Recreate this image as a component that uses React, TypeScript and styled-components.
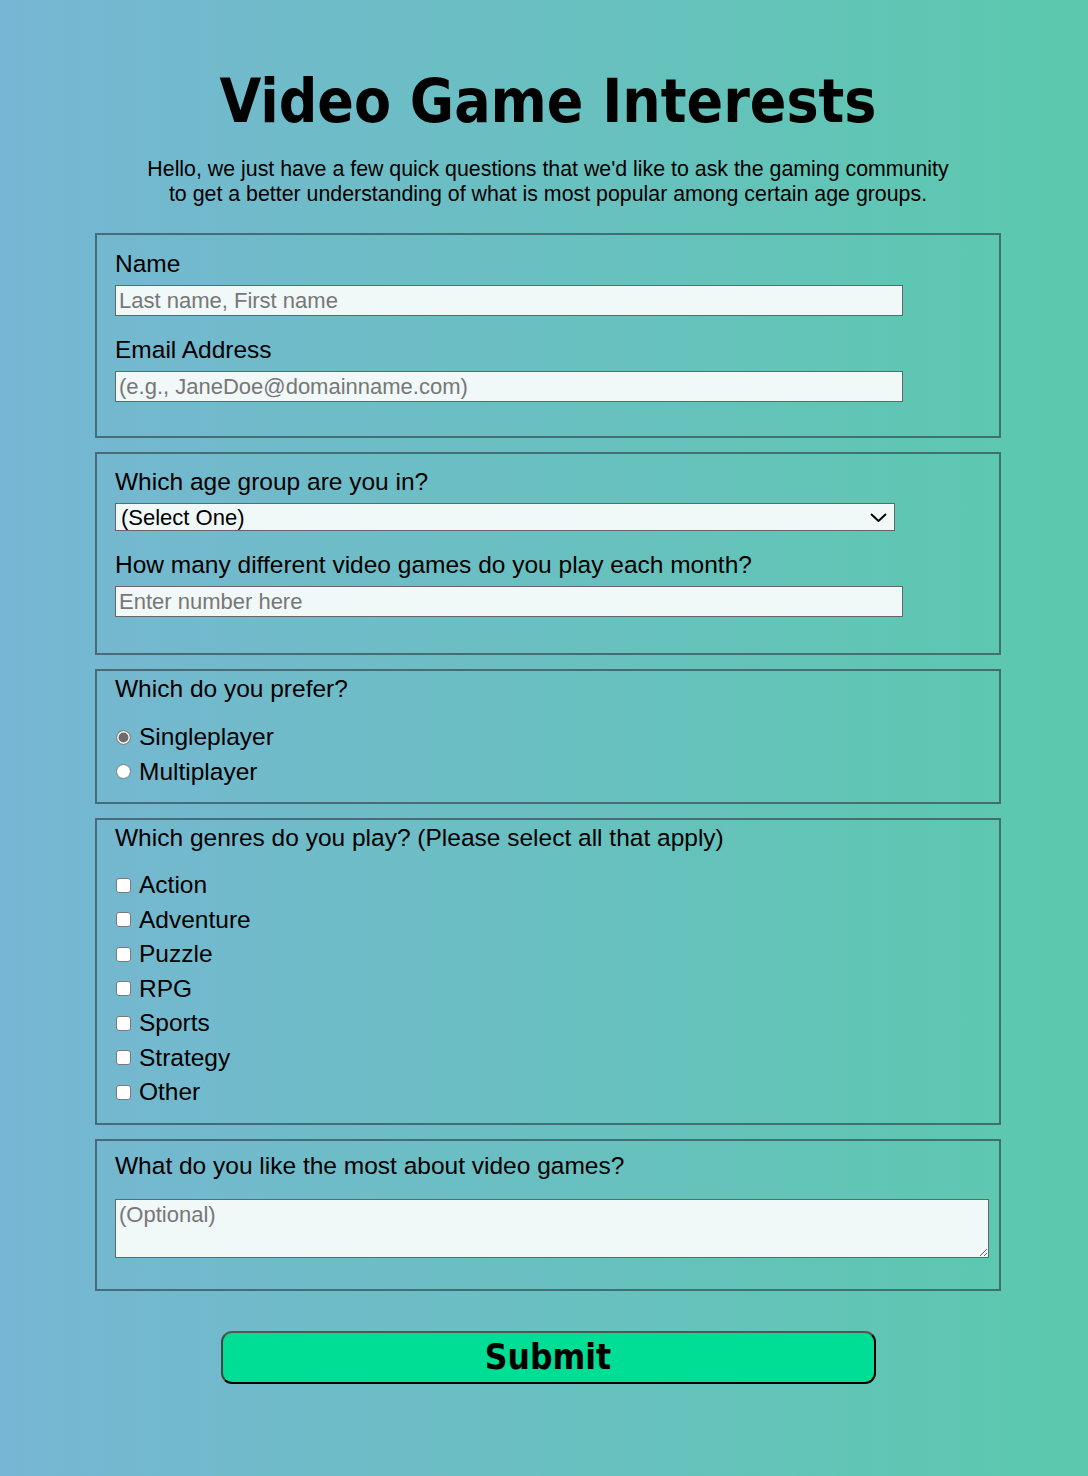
import React from "react";
import styled, { createGlobalStyle } from "styled-components";

const GlobalStyle = createGlobalStyle`
  html, body {
    margin: 0;
    padding: 0;
  }
  body {
    font-family: "Liberation Sans", Arial, sans-serif;
    color: #000;
  }
`;

const Page = styled.div`
  min-height: 100vh;
  box-sizing: border-box;
  background: linear-gradient(90deg, #77b6d4 0%, #5bc9ad 100%);
  padding: 66px 0 93px 8px;
  display: flex;
  flex-direction: column;
  align-items: center;
`;

const Title = styled.h1`
  margin: 0;
  font-family: "DejaVu Sans Condensed", "DejaVu Sans", Verdana, sans-serif;
  font-stretch: condensed;
  font-weight: bold;
  font-size: 60px;
  line-height: 70px;
  text-align: center;
`;

const Intro = styled.p`
  margin: 21px 0 0;
  font-size: 21.35px;
  line-height: 25px;
  text-align: center;
  width: 906px;
`;

const Form = styled.form`
  width: 906px;
  margin-top: 26px;
  display: flex;
  flex-direction: column;
  gap: 14px;
  align-items: stretch;
`;

const Section = styled.fieldset<{ $top: number; $bottom: number }>`
  margin: 0;
  min-width: 0;
  border: 2px solid rgba(45, 60, 65, 0.62);
  padding: ${(p) => p.$top}px 10px ${(p) => p.$bottom}px 18px;
  display: flex;
  flex-direction: column;
`;

const Field = styled.div`
  display: flex;
  flex-direction: column;
  align-items: flex-start;
  & + & {
    margin-top: 20px;
  }
`;

const Label = styled.label`
  display: block;
  font-size: 24.5px;
  line-height: 28px;
`;

const Question = styled.div<{ $gap: number }>`
  font-size: 24.5px;
  line-height: 28px;
  margin-bottom: ${(p) => p.$gap}px;
`;

const TextInput = styled.input`
  margin-top: 7px;
  box-sizing: border-box;
  width: 788px;
  height: 31px;
  padding: 0 3px;
  border: 1px solid #666;
  border-radius: 0;
  background: #f1f8f8;
  font-family: "Liberation Sans", Arial, sans-serif;
  font-size: 22px;
  color: #000;
  outline: none;
  &::placeholder {
    color: #777;
  }
`;

const SelectWrap = styled.div`
  position: relative;
  margin-top: 7px;
  width: 780px;
  height: 28px;
`;

const Select = styled.select`
  appearance: none;
  -webkit-appearance: none;
  box-sizing: border-box;
  width: 100%;
  height: 100%;
  padding: 0 30px 0 5px;
  border: 1px solid #666;
  border-radius: 0;
  background: #f1f8f8;
  font-family: "Liberation Sans", Arial, sans-serif;
  font-size: 22px;
  color: #000;
  outline: none;
`;

const Chevron = styled.svg`
  position: absolute;
  right: 8px;
  top: 10px;
  width: 17px;
  height: 9px;
  pointer-events: none;
`;

const TextArea = styled.textarea`
  margin-top: 19px;
  box-sizing: border-box;
  width: 874px;
  height: 59px;
  padding: 2px 3px;
  border: 1px solid #666;
  border-radius: 0;
  background: #f1f8f8;
  font-family: "Liberation Sans", Arial, sans-serif;
  font-size: 22px;
  line-height: 26px;
  color: #000;
  outline: none;
  &::placeholder {
    color: #777;
  }
`;

const Option = styled.label`
  display: flex;
  align-items: center;
  height: 34.5px;
  gap: 8px;
  font-size: 24.5px;
  line-height: 28px;
`;

const Radio = styled.input`
  appearance: none;
  -webkit-appearance: none;
  margin: 0 0 0 1px;
  width: 15px;
  height: 15px;
  min-width: 15px;
  box-sizing: border-box;
  border: 1px solid #7a7a7a;
  border-radius: 50%;
  background: #fff;
  flex: none;
  &:checked {
    background: #6c6c6c;
    box-shadow: inset 0 0 0 1.5px #fff;
    border-color: #8a8a8a;
  }
`;

const Check = styled.input`
  appearance: none;
  -webkit-appearance: none;
  margin: 0 0 0 1px;
  width: 15px;
  height: 15px;
  min-width: 15px;
  box-sizing: border-box;
  border: 1px solid #7a7a7a;
  border-radius: 3px;
  background: #fff;
  flex: none;
`;

const ButtonRow = styled.div`
  margin-top: 40px;
  display: flex;
  justify-content: center;
`;

const Submit = styled.button`
  width: 655px;
  height: 53px;
  box-sizing: border-box;
  border: 2px solid #000;
  border-top-color: #555;
  border-left-color: #444;
  border-radius: 11px;
  background: #00dd94;
  font-family: "DejaVu Sans Condensed", "DejaVu Sans", Verdana, sans-serif;
  font-stretch: condensed;
  font-weight: bold;
  font-size: 35px;
  color: #000;
  cursor: pointer;
  padding: 0;
`;

const genres = ["Action", "Adventure", "Puzzle", "RPG", "Sports", "Strategy", "Other"];

export default function App() {
  return (
    <>
      <GlobalStyle />
      <Page>
        <Title>Video Game Interests</Title>
        <Intro>
          Hello, we just have a few quick questions that we'd like to ask the gaming community
          <br />
          to get a better understanding of what is most popular among certain age groups.
        </Intro>
        <Form onSubmit={(e) => e.preventDefault()}>
          <Section $top={15} $bottom={34}>
            <Field>
              <Label htmlFor="name">Name</Label>
              <TextInput id="name" type="text" placeholder="Last name, First name" />
            </Field>
            <Field>
              <Label htmlFor="email">Email Address</Label>
              <TextInput id="email" type="email" placeholder="(e.g., JaneDoe@domainname.com)" />
            </Field>
          </Section>

          <Section $top={14} $bottom={36}>
            <Field>
              <Label htmlFor="age">Which age group are you in?</Label>
              <SelectWrap>
                <Select id="age" defaultValue="">
                  <option value="">(Select One)</option>
                  <option value="u13">Under 13</option>
                  <option value="13-17">13-17</option>
                  <option value="18-24">18-24</option>
                  <option value="25-34">25-34</option>
                  <option value="35+">35+</option>
                </Select>
                <Chevron viewBox="0 0 17 9" fill="none">
                  <path d="M1 1l7.5 7L16 1" stroke="#000" strokeWidth="2" />
                </Chevron>
              </SelectWrap>
            </Field>
            <Field>
              <Label htmlFor="count">How many different video games do you play each month?</Label>
              <TextInput id="count" type="number" placeholder="Enter number here" />
            </Field>
          </Section>

          <Section $top={4} $bottom={13}>
            <Question $gap={17}>Which do you prefer?</Question>
            <Option>
              <Radio type="radio" name="mode" defaultChecked />
              Singleplayer
            </Option>
            <Option>
              <Radio type="radio" name="mode" />
              Multiplayer
            </Option>
          </Section>

          <Section $top={4} $bottom={13}>
            <Question $gap={16}>Which genres do you play? (Please select all that apply)</Question>
            {genres.map((g) => (
              <Option key={g}>
                <Check type="checkbox" name="genre" value={g} />
                {g}
              </Option>
            ))}
          </Section>

          <Section $top={11} $bottom={31}>
            <Field>
              <Label htmlFor="like">What do you like the most about video games?</Label>
              <TextArea id="like" placeholder="(Optional)" />
            </Field>
          </Section>
        </Form>
        <ButtonRow>
          <Submit type="submit">Submit</Submit>
        </ButtonRow>
      </Page>
    </>
  );
}
